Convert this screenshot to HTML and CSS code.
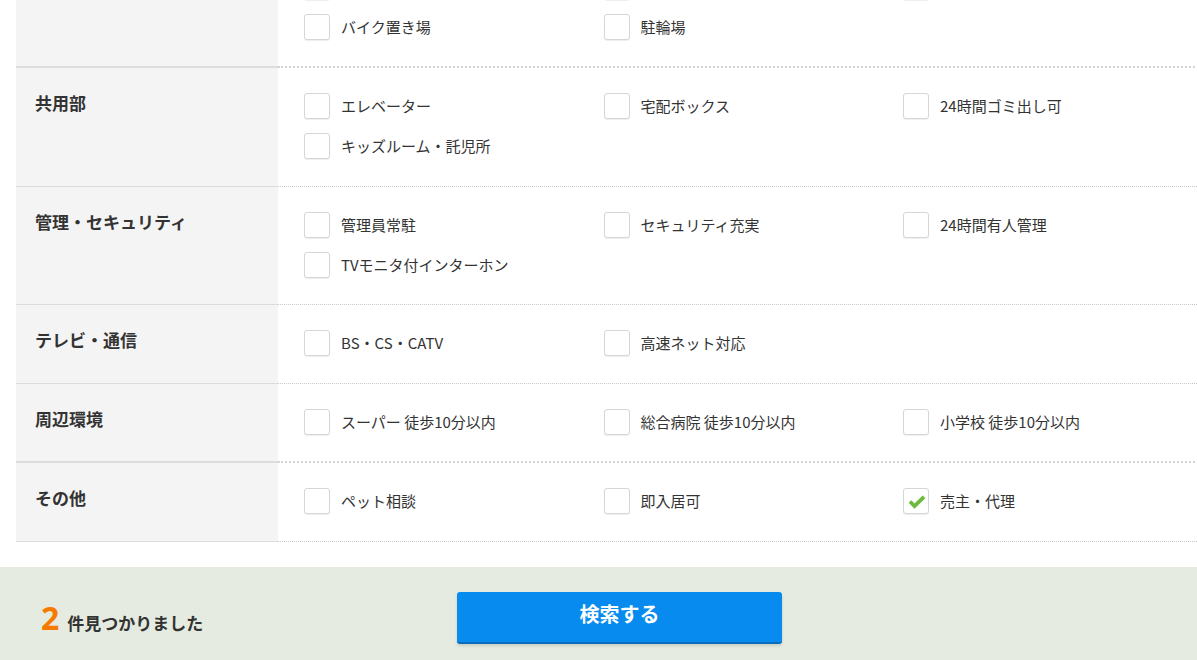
FILE: index.html
```html
<!DOCTYPE html>
<html lang="ja">
<head>
<meta charset="utf-8">
<title>こだわり条件</title>
<link rel="stylesheet" href="styles.css">
</head>
<body>
<div class="page">
  <div class="table">
    <div class="row sep">
      <div class="label"></div>
      <div class="opts">
        <label class="opt"><span class="box"></span><span class="txt">駐車場あり</span></label>
        <label class="opt"><span class="box"></span><span class="txt">駐車場2台分</span></label>
        <label class="opt"><span class="box"></span><span class="txt">平置き駐車場</span></label>
        <label class="opt"><span class="box"></span><span class="txt">バイク置き場</span></label>
        <label class="opt"><span class="box"></span><span class="txt">駐輪場</span></label>
      </div>
    </div>
    <div class="row">
      <div class="label">共用部</div>
      <div class="opts">
        <label class="opt"><span class="box"></span><span class="txt">エレベーター</span></label>
        <label class="opt"><span class="box"></span><span class="txt">宅配ボックス</span></label>
        <label class="opt"><span class="box"></span><span class="txt">24時間ゴミ出し可</span></label>
        <label class="opt"><span class="box"></span><span class="txt">キッズルーム・託児所</span></label>
      </div>
    </div>
    <div class="row">
      <div class="label">管理・セキュリティ</div>
      <div class="opts">
        <label class="opt"><span class="box"></span><span class="txt">管理員常駐</span></label>
        <label class="opt"><span class="box"></span><span class="txt">セキュリティ充実</span></label>
        <label class="opt"><span class="box"></span><span class="txt">24時間有人管理</span></label>
        <label class="opt"><span class="box"></span><span class="txt">TVモニタ付インターホン</span></label>
      </div>
    </div>
    <div class="row">
      <div class="label">テレビ・通信</div>
      <div class="opts">
        <label class="opt"><span class="box"></span><span class="txt">BS・CS・CATV</span></label>
        <label class="opt"><span class="box"></span><span class="txt">高速ネット対応</span></label>
      </div>
    </div>
    <div class="row sep">
      <div class="label">周辺環境</div>
      <div class="opts">
        <label class="opt"><span class="box"></span><span class="txt">スーパー 徒歩10分以内</span></label>
        <label class="opt"><span class="box"></span><span class="txt">総合病院 徒歩10分以内</span></label>
        <label class="opt"><span class="box"></span><span class="txt">小学校 徒歩10分以内</span></label>
      </div>
    </div>
    <div class="row">
      <div class="label">その他</div>
      <div class="opts">
        <label class="opt"><span class="box"></span><span class="txt">ペット相談</span></label>
        <label class="opt"><span class="box"></span><span class="txt">即入居可</span></label>
        <label class="opt"><span class="box checked"><svg viewBox="0 0 26 26" width="26" height="26"><polyline points="7,13.5 11.5,18 21,8.8" fill="none" stroke="#6dbb3c" stroke-width="3.8" stroke-linejoin="miter" stroke-linecap="butt"/></svg></span><span class="txt">売主・代理</span></label>
      </div>
    </div>
  </div>
  <div class="footer">
    <div class="count"><span class="num">2</span><span class="unit">件見つかりました</span></div>
    <button class="search" type="button">検索する</button>
  </div>
</div>
</body>
</html>
```

FILE: styles.css
```css
html, body {
  margin: 0;
  padding: 0;
  background: #fff;
  overflow: hidden;
}
body {
  font-family: "Noto Sans CJK JP", "Noto Sans", sans-serif;
  color: #333;
}
.page {
  margin-top: -51.5px;
}
.table {
  margin: 0 0 0 16px;
  width: 1181px;
}
.row {
  display: flex;
}
.label {
  width: 262px;
  flex: none;
  background: #f4f4f4;
  border-bottom: 1px solid #dcdcdc;
  box-sizing: border-box;
  padding: 22px 0 0 19px;
  font-size: 17px;
  font-weight: bold;
  line-height: 26px;
  color: #333;
}
.opts {
  flex: 1;
  display: grid;
  grid-template-columns: repeat(3, 299.5px);
  row-gap: 14px;
  padding: 25px 0 26.5px 26px;
  border-bottom: 1px dotted #c8c8c8;
  align-content: start;
}
.row.sep .label {
  border-bottom: 2px solid #dcdcdc;
}
.row.sep .opts {
  border-bottom: 2px dotted #d4d4d4;
}
.opt {
  display: flex;
  align-items: center;
  height: 26px;
  font-size: 15px;
  color: #333;
  white-space: nowrap;
}
.box {
  width: 26px;
  height: 26px;
  box-sizing: border-box;
  border: 1px solid #d6d6d6;
  border-radius: 3px;
  background: #fff;
  box-shadow: 0 1px 1px rgba(0,0,0,0.07);
  flex: none;
  position: relative;
}
.box svg {
  position: absolute;
  left: -1px;
  top: -1px;
}
.txt {
  margin-left: 11px;
  line-height: 26px;
}
.footer {
  margin-top: 25px;
  background: #e5ebe0;
  height: 100px;
  display: flex;
  align-items: flex-start;
  padding-left: 41px;
}
.count {
  width: 416px;
  flex: none;
  padding-top: 25px;
  height: 52px;
  display: flex;
  align-items: baseline;
  white-space: nowrap;
}
.num {
  color: #f77a00;
  font-size: 32px;
  font-weight: bold;
  line-height: 52px;
  font-family: "Open Sans", "Noto Sans", sans-serif;
}
.unit {
  margin-left: 8px;
  font-size: 17px;
  font-weight: bold;
  color: #333;
}
.search {
  margin-top: 25px;
  width: 325px;
  height: 52px;
  border: none;
  border-bottom: 2px solid #0a6cbd;
  border-radius: 3px;
  background: #078bef;
  color: #fff;
  font-family: "Noto Sans CJK JP", "Noto Sans", sans-serif;
  font-size: 20px;
  font-weight: bold;
  padding: 0 0 6px;
  box-shadow: 0 2px 3px rgba(0,0,0,0.12);
  cursor: pointer;
}
```
